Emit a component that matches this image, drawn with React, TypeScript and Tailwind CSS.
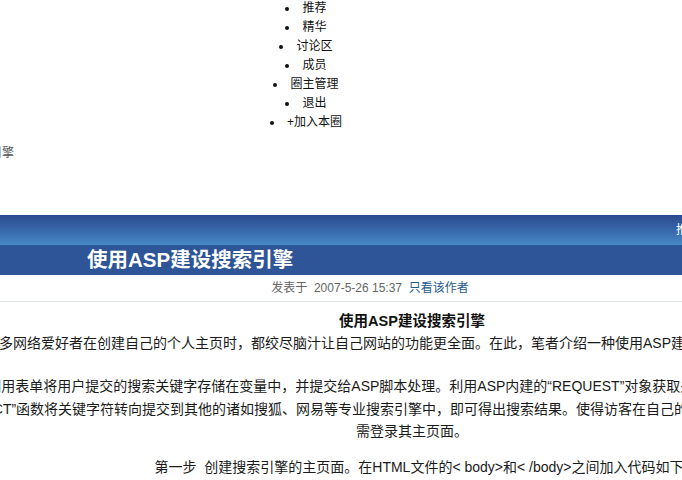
import React from 'react';

const font = "font-['Liberation_Sans','Noto_Sans_CJK_SC',sans-serif]";

const navItems = ['推荐', '精华', '讨论区', '成员', '圈主管理', '退出', '+加入本圈'];

const App: React.FC = () => {
  return (
    <div className={`w-[682px] h-[480px] overflow-hidden bg-white text-[#111] ${font}`}>
      {/* 圈子导航 */}
      <ul className="-mt-[1px] w-[612px] list-disc list-inside text-center text-[12px] leading-[19px]">
        {navItems.map((item) => (
          <li key={item}>
            <a className="text-[#111]">{item}</a>
          </li>
        ))}
      </ul>

      {/* 位置 */}
      <div className="mt-[12px] -ml-[386px] w-[400px] text-right whitespace-nowrap text-[12px] leading-[19px] text-[#555]">
        技术圈 » 使用ASP建设搜索引擎
      </div>

      {/* 标题栏 */}
      <div className="mt-[52px]">
        <div className="h-[30px] bg-linear-to-b from-[#2c4a8d] via-[#3767aa] to-[#4889c8] flex items-center pl-[676px] whitespace-nowrap text-[12px] text-white">
          推荐主题
        </div>
        <div className="h-[30px] bg-[#2e5597] flex items-center pl-[87px] whitespace-nowrap">
          <h1 className="text-[20.5px] font-bold text-white leading-none">使用ASP建设搜索引擎</h1>
        </div>
      </div>

      {/* 发表信息 */}
      <div className="pt-[4px] pb-[3px] pl-[58px] text-center text-[12px] leading-[19px] text-[#666] border-b border-[#dfe6ee] whitespace-nowrap">
        发表于&nbsp; 2007-5-26 15:37&nbsp; <a className="text-[#1f5b8e]">只看该作者</a>
      </div>

      {/* 正文 */}
      <div className="w-[1000px] -ml-[88px] text-center whitespace-nowrap text-[14px] text-[#1a1a1a]">
        <h2 className="mt-[8px] text-[14.5px] font-bold leading-[22px] text-[#111]">使用ASP建设搜索引擎</h2>
        <p className="indent-[28px] leading-[22px]">
          很多网络爱好者在创建自己的个人主页时，都绞尽脑汁让自己网站的功能更全面。在此，笔者介绍一种使用ASP建立一个简易搜索引擎的方法。
        </p>
        <p className="mt-[21px] indent-[28px] leading-[22.5px]">
          利用表单将用户提交的搜索关键字存储在变量中，并提交给ASP脚本处理。利用ASP内建的“REQUEST”对象获取关键字，然后用“RESPONSE.
          <br />
          REDIRECT”函数将关键字符转向提交到其他的诸如搜狐、网易等专业搜索引擎中，即可得出搜索结果。使得访客在自己的网站首页上就能直接搜索，而无
          <br />
          需登录其主页面。
        </p>
        <p className="mt-[13.5px] indent-[28px] leading-[22.5px]">
          第一步&nbsp;&nbsp;创建搜索引擎的主页面。在HTML文件的&lt; body&gt;和&lt; /body&gt;之间加入代码如下：
        </p>
      </div>
    </div>
  );
};

export default App;
